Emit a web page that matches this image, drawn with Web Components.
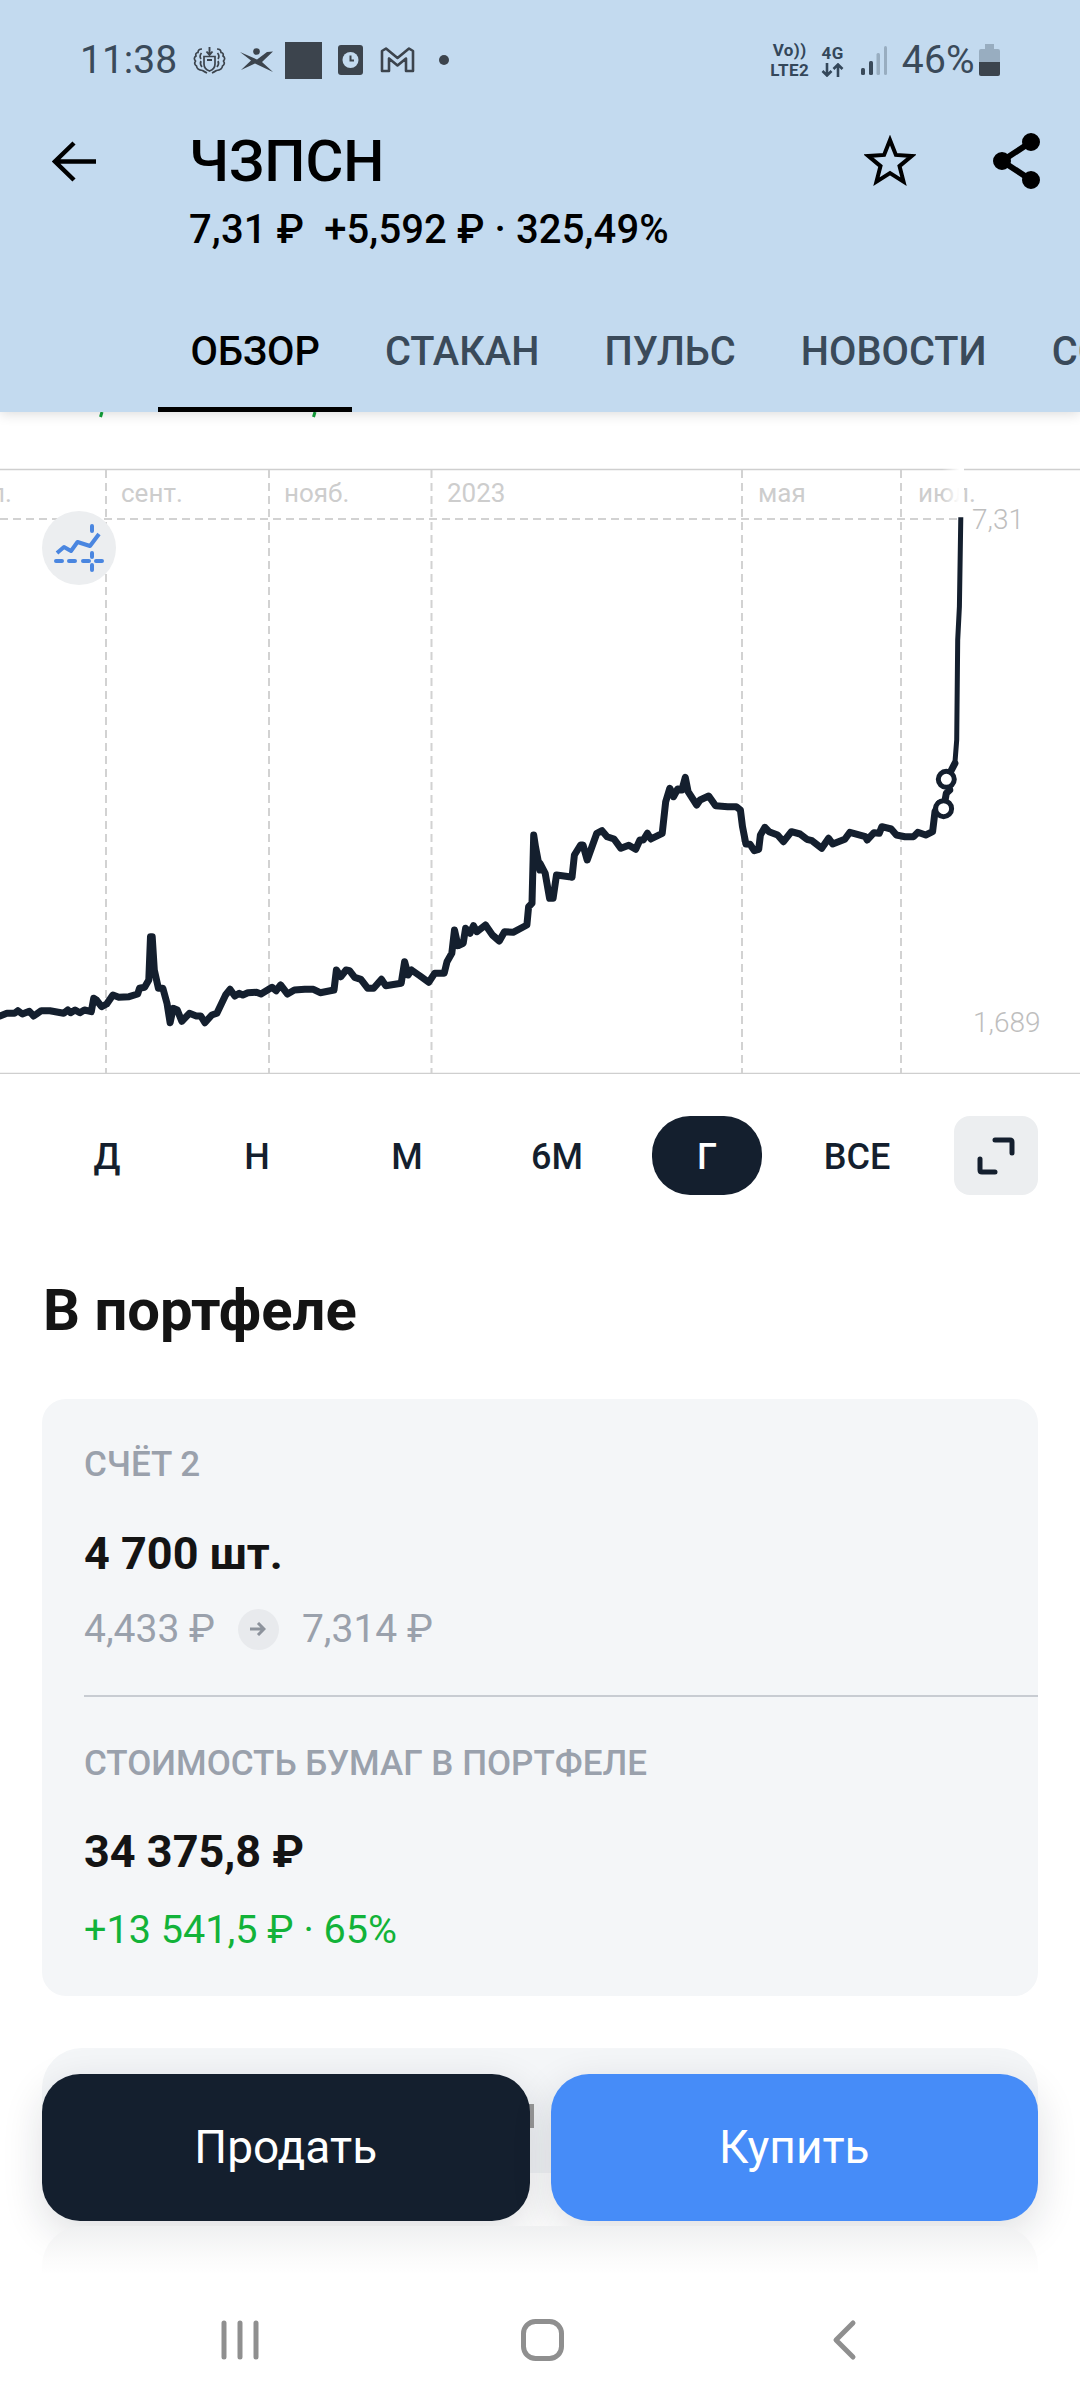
<!DOCTYPE html>
<html lang="ru">
<head>
<meta charset="utf-8">
<title>ЧЗПСН</title>
<style>
  html, body { margin: 0; padding: 0; background: #fff; }
  body { font-family: Roboto, "Noto Sans", sans-serif; }
</style>
</head>
<body>
<app-screen>
  <top-bar slot="top" ticker="ЧЗПСН" quote="7,31 ₽&nbsp; +5,592 ₽ · 325,49%">
    <tab-item active>ОБЗОР</tab-item>
    <tab-item>СТАКАН</tab-item>
    <tab-item>ПУЛЬС</tab-item>
    <tab-item>НОВОСТИ</tab-item>
    <tab-item>СОБЫТИЯ</tab-item>
  </top-bar>

  <price-chart></price-chart>

  <range-picker>
    <range-chip>Д</range-chip>
    <range-chip>Н</range-chip>
    <range-chip>М</range-chip>
    <range-chip>6М</range-chip>
    <range-chip active>Г</range-chip>
    <range-chip>ВСЕ</range-chip>
  </range-picker>

  <portfolio-card title="В портфеле">
    <span slot="account">СЧЁТ 2</span>
    <span slot="amount">4 700 шт.</span>
    <span slot="from">4,433 ₽</span>
    <span slot="to">7,314 ₽</span>
    <span slot="label">СТОИМОСТЬ БУМАГ В ПОРТФЕЛЕ</span>
    <span slot="value">34 375,8 ₽</span>
    <span slot="gain">+13 541,5 ₽ · 65%</span>
  </portfolio-card>

  <trade-bar slot="over">
    <trade-button style="--btn:#141f2e">Продать</trade-button>
    <trade-button style="--btn:#468cf8">Купить</trade-button>
  </trade-bar>

  <nav-bar slot="nav"></nav-bar>
</app-screen>

<script>
// whole phone screen: header on top, scrolled content, floating buttons, system nav
class AppScreen extends HTMLElement {
  constructor() {
    super();
    this.attachShadow({ mode: 'open' });
  }
  connectedCallback() {
    this.shadowRoot.innerHTML = `
      <style>
        :host { display: flex; flex-direction: column; width: 1080px; height: 2400px; overflow: hidden; background: #fff; }
        .top { display: block; position: relative; z-index: 2; }
        .body { flex: 1; min-height: 0; overflow: hidden; position: relative; }
        .nav { display: block; position: relative; z-index: 2; }
      </style>
      <div class="top"><slot name="top"></slot></div>
      <div class="body">
        <slot></slot>
        <slot name="over"></slot>
      </div>
      <div class="nav"><slot name="nav"></slot></div>
    `;
  }
}

class StatusBar extends HTMLElement {
  constructor() {
    super();
    this.attachShadow({ mode: 'open' });
  }
  connectedCallback() {
    const dark = '#3c444d';
    this.shadowRoot.innerHTML = `
      <style>
        :host { display: flex; align-items: center; justify-content: space-between; height: 120px; padding: 0 80px 0 80px; color: #3a4a5a; font-family: Roboto, sans-serif; }
        .side { display: flex; align-items: center; }
        .time, .pct { font-size: 39px; line-height: 1; }
        .pct { letter-spacing: 0.3px; }
        svg { display: block; flex: none; }
        .stack { display: flex; flex-direction: column; align-items: center; font-size: 17px; font-weight: 700; line-height: 20px; letter-spacing: 0.4px; color: #34475a; }
      </style>
      <div class="side">
        <span class="time">11:38</span>
        <svg style="margin-left:16px" width="33" height="28" viewBox="0 0 33 28" fill="none" stroke="${dark}" stroke-width="1.7">
          <path d="M11 10.500h11v7.500q0 5-5.500 7q-5.500-2-5.500-7z"/>
          <path d="M16.500 1v7.500M13.500 5.500l3 3.500l3-3.500M14 14h5" stroke-width="1.900"/>
          <path d="M9 3Q5 3 5 6.500Q2 7 3 10Q0 12 2.500 15Q0.500 18 3.500 20Q4 24 9.500 24.500Q12 26 14 27"/>
          <path d="M24 3Q28 3 28 6.500Q31 7 30 10Q33 12 30.500 15Q32.500 18 29.500 20Q29 24 23.500 24.500Q21 26 19 27"/>
          <path d="M8.500 7Q6 10 8 13M8 15Q6.500 18 9 21M24.500 7Q27 10 25 13M25 15Q26.500 18 24 21"/>
        </svg>
        <svg style="margin-left:14px" width="33" height="24" viewBox="0 0 33 24" fill="${dark}">
          <circle cx="16.500" cy="3.500" r="3.300"/>
          <path d="M0 4L17 11.500L27 4L33 3.500L22 14L33 24L15 15.500L1 22L11 12.500z"/>
        </svg>
        <span style="margin-left:12px;width:37px;height:37px;background:${dark};display:block"></span>
        <svg style="margin-left:16px" width="25" height="30" viewBox="0 0 25 30">
          <rect width="25" height="30" rx="3" fill="${dark}"/>
          <circle cx="12.500" cy="15" r="8" fill="#c3daef"/>
          <path d="M12.500 10.500V15.500H16" fill="none" stroke="${dark}" stroke-width="2"/>
        </svg>
        <svg style="margin-left:17px" width="35" height="26" viewBox="0 0 35 26">
          <path d="M2 24V4L6 1.500L17.500 11L29 1.500L33 4V24H26V11.500L17.500 18.500L9 11.500V24z" fill="none" stroke="${dark}" stroke-width="2.600" stroke-linejoin="round"/>
        </svg>
        <span style="margin-left:24px;width:10px;height:10px;border-radius:50%;background:${dark};display:block"></span>
      </div>
      <div class="side">
        <div class="stack" style="width:40px"><span>Vo))</span><span>LTE2</span></div>
        <div class="stack" style="width:24px;margin-left:11px"><span>4G</span>
          <svg width="23" height="14" viewBox="0 0 23 14" fill="none" stroke="#34475a" stroke-width="2.600"><path d="M6 0V12M1.500 8L6 12.500L10.500 8M17 14V2M12.500 6L17 1.500L21.500 6"/></svg>
        </div>
        <svg style="margin-left:15px" width="27" height="29" viewBox="0 0 27 29">
          <rect x="1" y="22" width="4" height="7" rx="1.500" fill="#3a4a5a"/>
          <rect x="9" y="15" width="4" height="14" rx="1.500" fill="#3a4a5a"/>
          <rect x="16.500" y="7" width="3.500" height="22" rx="1.500" fill="#98adc0"/>
          <rect x="24" y="0" width="3" height="29" rx="1.500" fill="#98adc0"/>
        </svg>
        <span class="pct" style="margin-left:15px">46%</span>
        <svg style="margin-left:4px" width="21" height="32" viewBox="0 0 21 32">
          <path d="M6 0h9v5h4q2 0 2 2v11H0V7q0-2 2-2h4z" fill="#98adc0"/>
          <path d="M0 18h21v12q0 2-2 2H2q-2 0-2-2z" fill="${dark}"/>
        </svg>
      </div>
    `;
  }
}

class TabItem extends HTMLElement {
  constructor() {
    super();
    this.attachShadow({ mode: 'open' });
  }
  connectedCallback() {
    this.shadowRoot.innerHTML = `
      <style>
        :host { display: block; flex: none; height: 92px; padding: 0 32.500px; box-sizing: border-box; font-size: 39.800px; line-height: 63px; font-weight: 500; color: #3a4a5a; white-space: nowrap; }
        :host([active]) { color: #000; border-bottom: 5px solid #000; }
      </style>
      <slot></slot>
    `;
  }
}

class TopBar extends HTMLElement {
  constructor() {
    super();
    this.attachShadow({ mode: 'open' });
  }
  connectedCallback() {
    this.shadowRoot.innerHTML = `
      <style>
        :host { display: block; height: 412px; background: #c3daef; box-shadow: 0 2px 12px rgba(0,0,0,.14); color: #000; font-family: Roboto, sans-serif; overflow: hidden; }
        .head { display: flex; height: 200px; padding-left: 52px; }
        .back { margin-top: 21px; }
        .titles { margin-left: 93px; flex: 1; }
        h1 { margin: 0; font-size: 58px; font-weight: 500; line-height: 70px; padding-top: 6px; }
        p { margin: 0; font-size: 40px; font-weight: 500; line-height: 48px; padding-top: 10px; letter-spacing: 0.100px; }
        .star { margin: 15px 0 0 0; }
        .share { margin: 13px 38px 0 76px; }
        svg { display: block; flex: none; }
        nav { display: flex; padding: 0 0 0 158px; height: 92px; }
      </style>
      <status-bar></status-bar>
      <div class="head">
        <svg class="back" width="44" height="42" viewBox="0 0 44 42" fill="none" stroke="#000" stroke-width="4.500">
          <path d="M44 20.500H3M22 2L3 20.500L22 39"/>
        </svg>
        <div class="titles">
          <h1>${this.getAttribute('ticker')}</h1>
          <p>${this.getAttribute('quote')}</p>
        </div>
        <svg class="star" width="52" height="52" viewBox="0 0 52 52" fill="none" stroke="#000" stroke-width="4">
          <path d="M26 5L31.900 19.900L47.900 20.900L35.500 31.100L39.500 46.600L26 38L12.500 46.600L16.500 31.100L4.100 20.900L20.100 19.900z"/>
        </svg>
        <svg class="share" width="50" height="56" viewBox="0 0 50 56" fill="#000" stroke="#000" stroke-width="6">
          <path d="M39 9L10 28L39 47" fill="none"/>
          <circle cx="39" cy="9" r="6" /><circle cx="10" cy="28" r="6"/><circle cx="39" cy="47" r="6"/>
        </svg>
      </div>
      <nav><slot></slot></nav>
    `;
  }
}

// price line traced from the year view, points are [x, y] in page pixels
const CHART_LEFT = [[0,708],[20,700],[42,700],[52,692],[65,702],[85,694],[98,708],[120,692],[145,692],[185,700],[197,690],[205,698],[218,690],[232,698],[245,690],[265,695],[272,655],[280,660],[295,680],[310,672],[328,645],[345,652],[375,650],[400,642],[405,625],[420,622],[432,600],[437,470],[442,470],[448,570],[460,625],[473,625],[485,670],[494,728],[503,685],[515,690],[528,724],[550,700],[570,708],[583,708],[595,728],[615,705],[630,700],[655,645],[668,628],[682,648],[695,640],[705,645],[720,638],[745,637],[758,642],[790,622],[802,632],[815,615],[835,642],[855,630],[885,628],[910,628],[930,638],[970,630],[977,570],[990,590],[1005,570],[1015,572],[1030,592],[1048,598],[1068,625],[1085,625],[1108,598],[1120,617],[1165,610],[1175,545],[1185,585],[1195,570],[1220,588],[1245,607],[1262,580],[1290,580],[1298,545],[1312,520],[1320,450],[1330,497],[1345,490],[1352,445],[1365,460],[1375,437],[1385,455],[1410,435],[1430,465],[1450,483],[1465,455],[1490,457],[1530,435],[1535,380],[1545,370],[1550,165],[1555,200],[1568,270]]
  .map(([x, y]) => [x / 2.904, 780 + y / 3]);
const CHART_RIGHT = [[0,1270],[15,1300],[28,1375],[38,1375],[48,1305],[85,1310],[93,1312],[100,1245],[118,1215],[125,1215],[137,1260],[165,1180],[180,1172],[195,1190],[215,1197],[235,1225],[258,1216],[278,1228],[290,1200],[300,1200],[312,1180],[322,1197],[355,1180],[365,1085],[377,1045],[388,1070],[400,1047],[412,1050],[422,1012],[430,1055],[455,1095],[465,1080],[490,1068],[510,1097],[545,1100],[570,1100],[582,1110],[588,1160],[598,1212],[610,1213],[622,1232],[635,1228],[640,1185],[653,1162],[665,1175],[690,1185],[707,1205],[730,1175],[755,1182],[775,1198],[790,1202],[818,1225],[838,1195],[850,1212],[885,1198],[900,1177],[945,1190],[950,1200],[970,1178],[985,1180],[993,1160],[1020,1167],[1035,1185],[1060,1190],[1085,1190],[1097,1177],[1120,1185],[1140,1175],[1147,1115],[1160,1090],[1172,1105],[1180,1060],[1190,1050],[1180,1020],[1205,970]]
  .map(([x, y]) => [540 + x / 2.904, 440 + y / 3]);
// the last jump is drawn thinner, as it is on the real chart
const CHART_SPIKE = [[1205,970],[1210,900],[1213,600],[1218,500],[1222,232]]
  .map(([x, y]) => [540 + x / 2.904, 440 + y / 3]);

const toPath = pts => 'M' + pts.map(p => p[0].toFixed(1) + ' ' + p[1].toFixed(1)).join(' L');

class PriceChart extends HTMLElement {
  constructor() {
    super();
    this.attachShadow({ mode: 'open' });
  }
  connectedCallback() {
    const ticks = [106, 269, 431.5, 742, 901];
    const labels = [[-46, 'июл.'], [121, 'сент.'], [284, 'нояб.'], [447, '2023'], [758, 'мая'], [918, 'июл.']];
    this.shadowRoot.innerHTML = `
      <style>
        :host { display: block; height: 662px; }
        svg { display: block; }
        text { font-family: Roboto, sans-serif; }
      </style>
      <svg width="1080" height="662" viewBox="0 412 1080 662">
        <defs>
          <linearGradient id="fade" x1="0" x2="1" y1="0" y2="0">
            <stop offset="0" stop-color="#fff" stop-opacity="0"/>
            <stop offset=".8" stop-color="#fff"/>
            <stop offset="1" stop-color="#fff"/>
          </linearGradient>
        </defs>
        <path d="M102 412l-1.500 5M315 412l-1.500 5" stroke="#12a13a" stroke-width="3" fill="none"/>
        <path d="M0 469.500H1080M0 1073.500H1080" stroke="#cfcfcf" stroke-width="1.500" fill="none"/>
        <g stroke="#d2d2d2" stroke-width="2" stroke-dasharray="8 5" fill="none">
          ${ticks.map(x => `<path d="M${x} 470V1073"/>`).join('')}
          <path d="M0 519H960"/>
        </g>
        <g font-size="26" fill="#cdcdcd">
          ${labels.map(([x, t]) => `<text x="${x}" y="502">${t}</text>`).join('')}
        </g>
        <rect x="942" y="464" width="22" height="54" fill="url(#fade)"/>
        <g fill="none" stroke="#141f2e" stroke-linejoin="round" stroke-linecap="round">
          <path d="${toPath(CHART_LEFT.concat(CHART_RIGHT))}" stroke-width="7"/>
          <path d="${toPath(CHART_SPIKE)}" stroke-width="5" stroke-linecap="butt"/>
        </g>
        <circle cx="943.600" cy="808.700" r="8" fill="#fff" stroke="#141f2e" stroke-width="5"/>
        <circle cx="946.300" cy="779.300" r="8" fill="#fff" stroke="#141f2e" stroke-width="5"/>
        <g font-size="28" font-weight="300" fill="#bebebe">
          <text x="972" y="529">7,31</text>
          <text x="973" y="1032">1,689</text>
        </g>
        <circle cx="79" cy="548" r="37" fill="#eceef0"/>
        <g fill="none" stroke="#4a86e0" stroke-width="4">
          <path d="M57 553L64 547L71 551L77.500 542L90 546L99 534" stroke-linejoin="round"/>
          <path d="M56 561H62M69 561H75M83 561H89M96 561H102" stroke-linecap="round"/>
          <path d="M92 526V531M92 553V557M92 565V570" stroke-linecap="round"/>
        </g>
      </svg>
    `;
  }
}

class RangeChip extends HTMLElement {
  constructor() {
    super();
    this.attachShadow({ mode: 'open' });
  }
  connectedCallback() {
    this.shadowRoot.innerHTML = `
      <style>
        :host { display: flex; align-items: center; justify-content: center; width: 150px; height: 79px; font-size: 36px; font-weight: 500; color: #141f2e; }
        span { display: flex; align-items: center; justify-content: center; box-sizing: border-box; padding-top: 3px; height: 79px; min-width: 110px; border-radius: 38px; }
        :host([active]) span { background: #141f2e; color: #fff; }
      </style>
      <span><slot></slot></span>
    `;
  }
}

class RangePicker extends HTMLElement {
  constructor() {
    super();
    this.attachShadow({ mode: 'open' });
  }
  connectedCallback() {
    this.shadowRoot.innerHTML = `
      <style>
        :host { display: flex; align-items: center; padding: 42px 0 0 32px; font-family: Roboto, sans-serif; }
        button { all: unset; display: flex; align-items: center; justify-content: center; width: 84px; height: 79px; margin-left: 22px; border-radius: 16px; background: #eceef0; }
      </style>
      <slot></slot>
      <button>
        <svg width="38" height="38" viewBox="0 0 38 38" fill="none" stroke="#141f2e" stroke-width="5" stroke-linecap="round" stroke-linejoin="round">
          <path d="M18 3H33Q35 3 35 5V16M3 22V33Q3 35 5 35H18"/>
        </svg>
      </button>
    `;
  }
}

class PortfolioCard extends HTMLElement {
  constructor() {
    super();
    this.attachShadow({ mode: 'open' });
  }
  connectedCallback() {
    this.shadowRoot.innerHTML = `
      <style>
        :host { display: block; padding: 0 42px; font-family: Roboto, sans-serif; color: #141414; }
        h2 { margin: 0; padding-top: 80px; font-size: 58px; line-height: 70px; font-weight: 700; padding-left: 1px; }
        .card { margin-top: 54px; background: #f4f6f8; border-radius: 24px; padding: 46px 0 42px 42px; }
        .label { display: block; font-size: 35px; line-height: 40px; font-weight: 500; color: #9aa1ac; }
        .big { display: block; font-size: 45px; line-height: 56px; font-weight: 700; }
        .row { display: flex; align-items: center; height: 48px; margin-top: 23px; font-size: 39px; color: #9aa1ac; }
        .go { display: flex; align-items: center; justify-content: center; width: 41px; height: 41px; border-radius: 50%; background: #e8eaed; margin: 0 23px; }
        hr { border: 0; height: 2px; background: #c8ccd2; margin: 42px 0 47px; }
        .gain { display: block; margin-top: 26px; font-size: 39.600px; line-height: 48px; color: #12b339; }
        .more { position: relative; height: 125px; margin-top: 52px; background: #f4f6f8; border-radius: 40px; }
        .more i { position: absolute; left: 487px; top: 56px; width: 5px; height: 24px; background: #9a9a9a; }
      </style>
      <h2>${this.getAttribute('title')}</h2>
      <div class="card">
        <span class="label"><slot name="account"></slot></span>
        <span class="big" style="margin-top:41px"><slot name="amount"></slot></span>
        <div class="row">
          <slot name="from"></slot>
          <span class="go">
            <svg width="16" height="14" viewBox="0 0 16 14" fill="none" stroke="#8d939c" stroke-width="3"><path d="M0 7H14M8 1L14 7L8 13"/></svg>
          </span>
          <slot name="to"></slot>
        </div>
        <hr>
        <span class="label"><slot name="label"></slot></span>
        <span class="big" style="margin-top:40px"><slot name="value"></slot></span>
        <span class="gain"><slot name="gain"></slot></span>
      </div>
      <div class="more"><i></i></div>
    `;
  }
}

class TradeButton extends HTMLElement {
  constructor() {
    super();
    this.attachShadow({ mode: 'open' });
  }
  connectedCallback() {
    this.shadowRoot.innerHTML = `
      <style>
        :host { display: flex; align-items: center; justify-content: center; flex: 1; box-sizing: border-box; height: 147px; padding-bottom: 2px; border-radius: 38px; background: var(--btn); color: #fff; font-size: 46px; box-shadow: 0 12px 40px rgba(20,31,46,.14); }
      </style>
      <slot></slot>
    `;
  }
}

// floating buttons; the next card fades out under them, on top of their shadow
class TradeBar extends HTMLElement {
  constructor() {
    super();
    this.attachShadow({ mode: 'open' });
  }
  connectedCallback() {
    this.shadowRoot.innerHTML = `
      <style>
        :host { display: flex; gap: 21px; position: absolute; left: 0; right: 0; bottom: 0; padding: 0 42px 52px; font-family: Roboto, sans-serif; }
        .veil { position: absolute; left: 42px; right: 42px; top: 152px; height: 90px; border-radius: 40px 40px 0 0; background: linear-gradient(#eff0f1, #fbfbfb 35%, #fff 55%); }
      </style>
      <slot></slot>
      <div class="veil"></div>
    `;
  }
}

class NavBar extends HTMLElement {
  constructor() {
    super();
    this.attachShadow({ mode: 'open' });
  }
  connectedCallback() {
    this.shadowRoot.innerHTML = `
      <style>
        :host { display: block; height: 127px; background: #fff; }
        svg { display: block; }
      </style>
      <svg width="1080" height="127" viewBox="0 2273 1080 127" fill="none" stroke="#8f8f8f" stroke-width="5" stroke-linecap="round" stroke-linejoin="round">
        <path d="M224 2323V2357M240 2323V2357M256 2323V2357"/>
        <rect x="523.500" y="2321.500" width="38" height="37" rx="12"/>
        <path d="M853 2323L836 2340L853 2357"/>
      </svg>
    `;
  }
}

// children first so that their hosts are ready when the screen is upgraded
customElements.define('status-bar', StatusBar);
customElements.define('tab-item', TabItem);
customElements.define('top-bar', TopBar);
customElements.define('price-chart', PriceChart);
customElements.define('range-chip', RangeChip);
customElements.define('range-picker', RangePicker);
customElements.define('portfolio-card', PortfolioCard);
customElements.define('trade-button', TradeButton);
customElements.define('trade-bar', TradeBar);
customElements.define('nav-bar', NavBar);
customElements.define('app-screen', AppScreen);
</script>
</body>
</html>
